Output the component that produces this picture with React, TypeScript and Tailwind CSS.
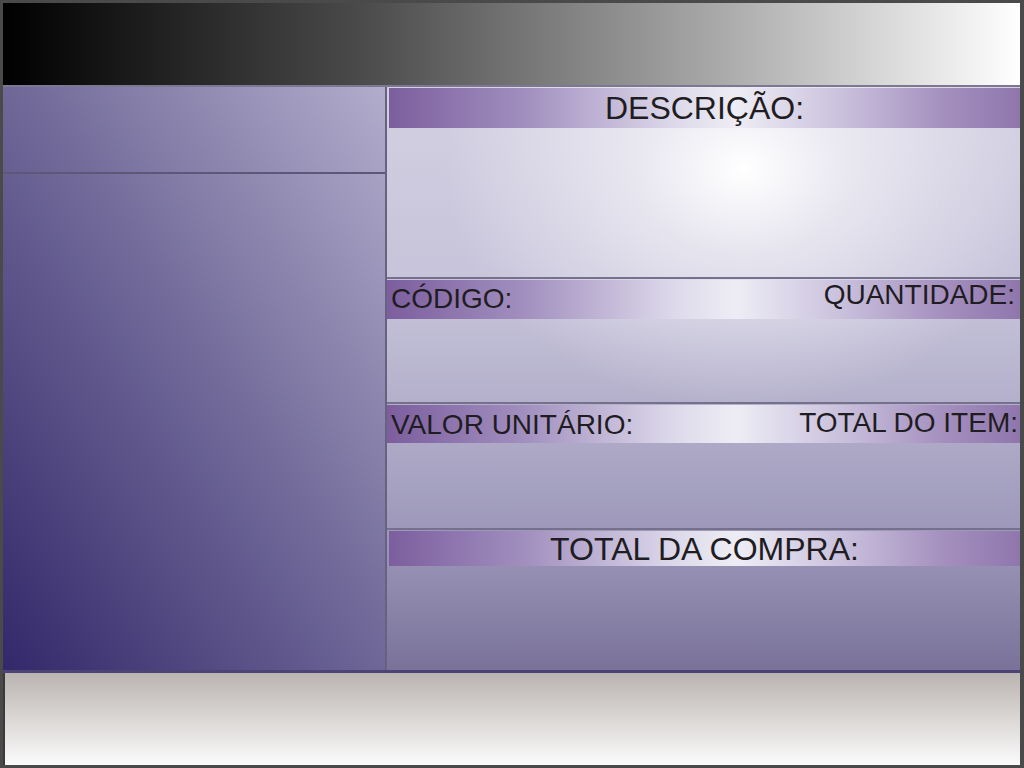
import React from "react";

const band =
  "bg-[linear-gradient(to_right,#7c5e9e_0%,#a290bf_22%,#dcd8ea_45%,#eeedf5_55%,#c9c0dc_72%,#a48fbe_88%,#8f77ad_100%)]";

export default function App() {
  return (
    <div
      className="w-[1024px] h-[768px] bg-[#4a4a4a] pt-[3px] pl-[3px] pr-[4px] pb-[3px] flex flex-col overflow-hidden"
      style={{ fontFamily: '"Liberation Sans", Arial, sans-serif' }}
    >
      {/* top bar */}
      <div className="h-[84px] shrink-0 bg-[linear-gradient(to_right,#000000,#4a4a4a_35%,#a8a8a8_70%,#ffffff)] border-b-2 border-[#7c7892]" />

      {/* main */}
      <div className="h-[583px] shrink-0 flex">
        {/* left column */}
        <div className="w-[384px] flex flex-col bg-[linear-gradient(to_top_right,#33286a,#6e6797_50%,#b2adcc)] border-r-2 border-[#67627f]">
          <div className="h-[87px] border-b-2 border-[#5d587a]" />
          <div className="flex-1" />
        </div>

        {/* right column */}
        <div className="flex-1 flex flex-col text-[#1f1d22] bg-[radial-gradient(ellipse_300px_240px_at_357px_82px,rgba(255,255,255,1)_0%,rgba(255,255,255,0.55)_35%,rgba(255,255,255,0)_100%),linear-gradient(to_bottom,#d3d0e2_0%,#c6c3da_35%,#aeaac7_60%,#9994b6_80%,#7a7299_100%)]">
          {/* descrição */}
          <div className="h-[192px] flex flex-col border-b-2 border-[#75718c]">
            <div className={`h-[40px] mt-[1px] ${band} text-center text-[32px] leading-[40px] ml-[2px]`}>
              DESCRIÇÃO:
            </div>
            <div className="flex-1" />
          </div>

          {/* código / quantidade */}
          <div className="h-[125px] flex flex-col border-b-2 border-[#75718c]">
            <div className={`h-[39px] mt-[1px] ${band} flex justify-between items-start text-[28px] pl-[4px] pr-[5px]`}>
              <span className="leading-[37px]">CÓDIGO:</span>
              <span className="leading-[30px]">QUANTIDADE:</span>
            </div>
            <div className="flex-1" />
          </div>

          {/* valor unitário / total do item */}
          <div className="h-[126px] flex flex-col border-b-2 border-[#75718c]">
            <div className={`h-[38px] mt-[1px] ${band} flex justify-between items-start text-[28px] pl-[4px] pr-[2px]`}>
              <span className="leading-[39px]">VALOR UNITÁRIO:</span>
              <span className="leading-[35px]">TOTAL DO ITEM:</span>
            </div>
            <div className="flex-1" />
          </div>

          {/* total da compra */}
          <div className="flex-1 flex flex-col">
            <div className={`h-[35px] mt-[1px] ${band} text-center text-[32px] leading-[36px] ml-[2px]`}>
              TOTAL DA COMPRA:
            </div>
            <div className="flex-1" />
          </div>
        </div>
      </div>

      {/* footer */}
      <div className="flex-1 border-t-[3px] border-[#4b4474] pl-[2px] bg-[#3a3a3a]">
        <div className="h-full bg-[linear-gradient(to_bottom,#bab4b2,#d4d0ce_40%,#fbfbfb)]" />
      </div>
    </div>
  );
}
